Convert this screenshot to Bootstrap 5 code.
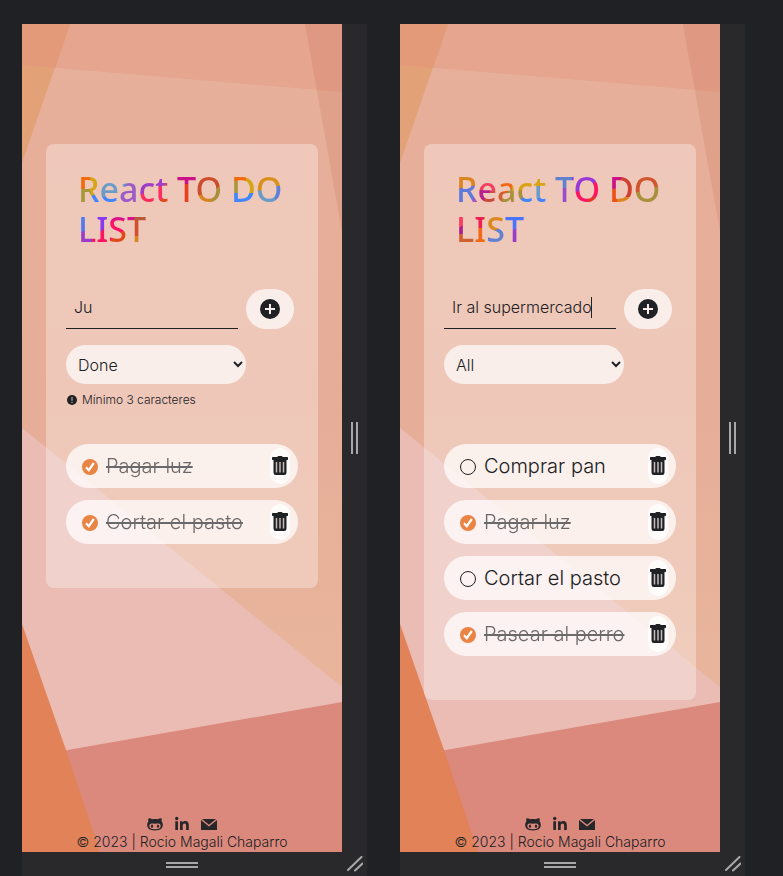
<!DOCTYPE html>
<html lang="es">
<head>
<meta charset="utf-8">
<meta name="viewport" content="width=device-width, initial-scale=1">
<title>React TO DO LIST</title>
<link rel="stylesheet" href="https://cdn.jsdelivr.net/npm/bootstrap@5.3.0/dist/css/bootstrap.min.css">
<style>
  :root { --ink: #202124; --rail: #29292b; }
  body { background: var(--ink); color: var(--ink); font-family: Inter, "Liberation Sans", sans-serif; font-weight: 300; }
  .stage { grid-template-columns: repeat(auto-fit, minmax(340px, 1fr)); gap: 33px; padding: 24px 38px 0 22px; }
  .device { grid-template-columns: 1fr 25px; grid-template-rows: 1fr 24px; background: var(--rail); }
  .screen { padding: 120px 24px 0; background: url("data:image/svg+xml,%3Csvg xmlns='http://www.w3.org/2000/svg' viewBox='0 0 320 828' preserveAspectRatio='none'%3E%3Cdefs%3E%3ClinearGradient id='g' x1='0' y1='0' x2='0' y2='1'%3E%3Cstop offset='0' stop-color='%23e7b09b'/%3E%3Cstop offset='.45' stop-color='%23e6ad98'/%3E%3Cstop offset='.75' stop-color='%23e8b49b'/%3E%3C/linearGradient%3E%3C/defs%3E%3Cpath fill='url(%23g)' d='M0 0h320v828H0z'/%3E%3Cpath fill='%23e5a58e' d='M0 0h320v68L0 41z'/%3E%3Cpath fill='%23e3a178' d='M0 0h48L0 139z'/%3E%3Cpath fill='%23e39a78' d='M0 0h48L33 44 0 41z'/%3E%3Cpath fill='%23dfa18a' d='M283 0h37v208z'/%3E%3Cpath fill='%23df9882' d='M283 0h37v68l-25-2z'/%3E%3Cpath fill='%23eabcb4' d='M0 404L320 663V828H0z'/%3E%3Cpath fill='%23db897c' d='M0 734L320 678V828H0z'/%3E%3Cpath fill='%23e28258' d='M0 600L44 726 78 828H0z'/%3E%3C/svg%3E") center / 100% 100% no-repeat; }
  .todo { background: rgba(255, 255, 255, .32); border-radius: 8px; padding: 25px 20px 44px; }
  .todo-title { font: 500 34px/40px "Noto Sans", "Open Sans", sans-serif; margin: 0 12px 40px; color: transparent; background-repeat: no-repeat; background-size: 208px 80px; -webkit-background-clip: text; background-clip: text; }
  .title-a { background-color: #c0487c; background-image: url("data:image/svg+xml,%3Csvg xmlns='http://www.w3.org/2000/svg' viewBox='0 0 208 80'%3E%3Cpath fill='%237d7fd0' d='M36 0h24v40H36z'/%3E%3Cpath fill='%23f26a0c' d='M0 0h14L10 22H0z'/%3E%3Cpath fill='%23d4a514' d='M14 0h8v40H6l4-18z'/%3E%3Cpath fill='%23a8983c' d='M0 20h12l4 20H0z'/%3E%3Cpath fill='%234285ff' d='M12 28l10-6v18H16zM20 24h20v16H20z'/%3E%3Cpath fill='%236b9bc8' d='M20 0h32L44 24 20 29z'/%3E%3Cpath fill='%239b5bc8' d='M40 27l12-15h8v28H38z'/%3E%3Cpath fill='%23a03cc8' d='M58 0h28v18L58 29z'/%3E%3Cpath fill='%23ff2e60' d='M58 28l20-10 17-2v24H58z'/%3E%3Cpath fill='%23e04818' d='M80 40l2-9 12-4v13z'/%3E%3Cpath fill='%23cc1088' d='M94 0h26v16H94z'/%3E%3Cpath fill='%23e8401c' d='M94 15h24v25H94z'/%3E%3Cpath fill='%23cb4e2c' d='M118 0h26v24l-26 5z'/%3E%3Cpath fill='%23d88420' d='M118 27l18-5v18h-18z'/%3E%3Cpath fill='%23a8903c' d='M134 23l10-8v25h-12z'/%3E%3Cpath fill='%23f26a0c' d='M150 0h18v12h-18z'/%3E%3Cpath fill='%23d4a514' d='M168 0h12v24h-28V12h16z'/%3E%3Cpath fill='%23a8983c' d='M150 12h10v13h-10z'/%3E%3Cpath fill='%234285ff' d='M150 24h28v16h-28z'/%3E%3Cpath fill='%23d89018' d='M178 0h30v20l-30 4z'/%3E%3Cpath fill='%236b9bc8' d='M178 22l30-4v22h-30z'/%3E%3Cpath fill='%236080d8' d='M196 17h12v23h-10z'/%3E%3Cpath fill='%235078f0' d='M0 40h18v20L0 66z'/%3E%3Cpath fill='%239b3cc8' d='M0 64l18-6v22H0z'/%3E%3Cpath fill='%23ff1464' d='M14 80V68l15-14v26z'/%3E%3Cpath fill='%238838f0' d='M18 40h22L24 62h-6z'/%3E%3Cpath fill='%23d8108c' d='M36 40h24v14l-28 4-6-4z'/%3E%3Cpath fill='%23ff1464' d='M28 58l8-7h12v15l-20 8z'/%3E%3Cpath fill='%23e04818' d='M28 74l20-14v20H28z'/%3E%3Cpath fill='%23b85838' d='M58 40h12v12H56z'/%3E%3Cpath fill='%23d05030' d='M48 51h22v16H48z'/%3E%3Cpath fill='%23d88420' d='M48 67h22v13H48z'/%3E%3C/svg%3E"); }
  .title-b { background-color: #cf5044; background-image: url("data:image/svg+xml,%3Csvg xmlns='http://www.w3.org/2000/svg' viewBox='0 0 208 80'%3E%3Cpath fill='%23dc8420' d='M0 0h22v17L0 20z'/%3E%3Cpath fill='%235f78dc' d='M0 20l22-4v24H0z'/%3E%3Cpath fill='%239b5bc8' d='M14 34l6-8v14h-6z'/%3E%3Cpath fill='%23f04060' d='M20 0h20v22H20z'/%3E%3Cpath fill='%23b8208c' d='M20 21h14v8l-6 11h-8z'/%3E%3Cpath fill='%23c84a38' d='M26 40l4-16h10v16z'/%3E%3Cpath fill='%23f06818' d='M40 0h17v22L40 24z'/%3E%3Cpath fill='%23d06030' d='M39 23h12v17H39z'/%3E%3Cpath fill='%23a8903c' d='M46 40V30l8-10h14v20z'/%3E%3Cpath fill='%23d8a414' d='M56 0h34v19L56 22z'/%3E%3Cpath fill='%234285ff' d='M64 31l14-14h16v23H64z'/%3E%3Cpath fill='%236b9bc8' d='M76 17h16v10l-16 4z'/%3E%3Cpath fill='%236080d0' d='M94 0h26v20H94z'/%3E%3Cpath fill='%239b4cc8' d='M94 19h24v21H94z'/%3E%3Cpath fill='%239838d8' d='M116 0h28v14L132 28h-16z'/%3E%3Cpath fill='%23ff1464' d='M133 17l11-7v30h-28V25z'/%3E%3Cpath fill='%23e43828' d='M132 40V30l12-4v14z'/%3E%3Cpath fill='%23cc1088' d='M150 0h22v16l-22 6z'/%3E%3Cpath fill='%23d04030' d='M172 0h8v29h-18V14z'/%3E%3Cpath fill='%23f05014' d='M150 20h12v20h-12z'/%3E%3Cpath fill='%23dc8420' d='M161 28h18v12h-18z'/%3E%3Cpath fill='%23d05630' d='M178 0h30v18l-30 8z'/%3E%3Cpath fill='%23a8903c' d='M178 24l30-8v24h-30z'/%3E%3Cpath fill='%23ff3860' d='M0 40h18v20H0z'/%3E%3Cpath fill='%23a82088' d='M0 60l8-4v10H0z'/%3E%3Cpath fill='%23d06030' d='M0 65h18v15H0z'/%3E%3Cpath fill='%23f02050' d='M18 40h10v20H18z'/%3E%3Cpath fill='%23f06818' d='M18 59h10v21H18z'/%3E%3Cpath fill='%23dc8820' d='M28 40h20v24l-20 16z'/%3E%3Cpath fill='%236080d0' d='M29 71l8-9 10-4v22H29z'/%3E%3Cpath fill='%234a74ff' d='M47 40h24v24l-24 4z'/%3E%3Cpath fill='%239b3cc8' d='M47 66l24-12v26H47z'/%3E%3C/svg%3E"); }
  .entry, .entry:focus { border: 0; border-bottom: 1px solid var(--ink); border-radius: 0; background-color: transparent; color: var(--ink); font-size: 16px; font-weight: 300; height: 40px; padding: 0 8px 4px; box-shadow: none; }
  .entry.typing { background: linear-gradient(var(--ink), var(--ink)) 147px 8px / 1px 21px no-repeat; caret-color: transparent; }
  .add-btn { background: #faeeea; border: 0; border-radius: 20px; width: 48px; height: 40px; }
  .filter { appearance: auto; background: #faeeea; color: var(--ink); border: 0; border-radius: 20px; width: 180px; height: 39px; padding: 0 0 0 8px; font-size: 16px; font-weight: 300; }
  .hint { font-size: 12px; line-height: 16px; height: 16px; gap: 5px; padding-left: 1px; font-weight: 300; margin-top: 8px; }
  .tasks { gap: 12px; margin: 36px 0 0; }
  .task { height: 44px; border-radius: 22px; background: rgba(255, 255, 255, .72); padding: 4px 8px 4px 16px; }
  .tick { appearance: none; flex: none; width: 16px; height: 16px; margin: 2px 8px 0 0; border: 1px solid var(--ink); border-radius: 50%; }
  .tick:checked { border: 0; background: #ea8444 url("data:image/svg+xml,%3Csvg xmlns='http://www.w3.org/2000/svg' viewBox='0 0 16 16'%3E%3Cpath d='M4 8.2l2.8 3L11.8 4' fill='none' stroke='white' stroke-width='2.2'/%3E%3C/svg%3E"); }
  .task-name { font-size: 20px; line-height: 24px; white-space: nowrap; font-weight: 300; }
  .tick:checked + .task-name { text-decoration: line-through; opacity: .65; }
  .bin-btn { width: 20px; height: 36px; border: 0; border-radius: 10px; background: rgba(255, 255, 255, .8); }
  .foot { font-size: 14px; line-height: 20px; }
  .links { gap: 11px; line-height: 16px; }
  .links a { color: #27272a; }
  svg { display: block; flex: none; }
</style>
</head>
<body>
<svg class="d-none" xmlns="http://www.w3.org/2000/svg">
  <symbol id="i-plus" viewBox="0 0 20 20"><circle cx="10" cy="10" r="10" fill="#202124"/><path d="M10 5v10M5 10h10" stroke="#faeeea" stroke-width="2"/></symbol>
  <symbol id="i-bin" viewBox="0 0 16 20"><path fill="#202124" d="M0 1.600Q0 1 .8 1H5.300Q5.600 0 6.500 0h3q.9 0 1.200 1h4.500q.8 0 .8.600V3.600q0 .4-.5.400H14.500v12.500q0 2.500-2.300 2.500H3.800q-2.300 0-2.300-2.500V4H.5Q0 4 0 3.600z"/><path d="M4.500 6v10.500M8 6v10.500M11.500 6v10.500" stroke="#c4bcbb" stroke-width="1.500"/></symbol>
  <symbol id="i-alert" viewBox="0 0 10 10"><circle cx="5" cy="5" r="5" fill="#202124"/><path d="M5 2v3.700M5 6.800V8" stroke="#b09a94" stroke-width="1.300"/></symbol>
  <symbol id="i-cat" viewBox="0 0 16 16"><path fill="currentColor" fill-rule="evenodd" d="M1.600 2.200C3 2 4.200 2.600 5.200 3.300c1.800-.4 3.800-.4 5.600 0 1-.7 2.200-1.300 3.600-1.100.5 1.300.5 2.400.2 3.300.9 1 1.200 2.100 1.200 3.300 0 4-2.600 5.600-7.800 5.600S.2 12.800.2 8.800c0-1.200.3-2.300 1.200-3.300-.3-.9-.3-2 .2-3.300zM4.800 7.600c-1.700 0-2.500 1-2.500 2.400 0 2.300 2 3.200 5.700 3.200s5.700-.9 5.700-3.200c0-1.400-.8-2.400-2.500-2.400-1.200 0-2 .2-3.200.2s-2-.2-3.200-.2z"/><ellipse cx="5" cy="10.200" rx="1.100" ry="1.600" fill="currentColor"/><ellipse cx="11" cy="10.200" rx="1.100" ry="1.600" fill="currentColor"/></symbol>
  <symbol id="i-in" viewBox="0 0 16 16"><circle cx="2.700" cy="2.500" r="1.700" fill="currentColor"/><path fill="currentColor" d="M1.300 5.300H4V14H1.300zM6 5.300h2.600v1.200c.5-.8 1.400-1.400 2.700-1.400 2.700 0 3.500 1.700 3.500 4.100V14h-2.700V9.700c0-1.200-.2-2.200-1.500-2.200S8.700 8.500 8.700 9.700V14H6z"/></symbol>
  <symbol id="i-mail" viewBox="0 0 16 16"><path fill="currentColor" d="M1 3h14L8 8.700zM0 4.100l8 6.300 8-6.300V14H0z"/></symbol>
  <symbol id="i-rail-v" viewBox="0 0 8 32"><path d="M1 0v32M6 0v32" stroke="#a8a8aa" stroke-width="2"/></symbol>
  <symbol id="i-rail-h" viewBox="0 0 32 8"><path d="M0 3h32M0 7h32" stroke="#a8a8aa" stroke-width="2"/></symbol>
  <symbol id="i-corner" viewBox="0 0 16 16"><path d="M1 14L14.500 1M8 14.500L15.500 7.500" stroke="#a8a8aa" stroke-width="2" stroke-linecap="round"/></symbol>
</svg>

<main class="stage d-grid min-vh-100">
  <div class="device d-grid">
    <section class="screen d-flex flex-column">
      <div class="todo">
        <h1 class="todo-title title-a">React TO DO LIST</h1>
        <form>
          <div class="d-flex gap-2 pe-1 mb-3">
            <input class="form-control entry" type="text" value="Ju" aria-label="Nueva tarea">
            <button class="btn add-btn d-flex flex-shrink-0 align-items-center justify-content-center p-0" type="button" aria-label="Agregar"><svg width="20" height="20"><use href="#i-plus"/></svg></button>
          </div>
          <select class="filter d-block" aria-label="Filtro"><option>All</option><option selected>Done</option></select>
          <p class="hint d-flex align-items-center mb-0"><svg width="10" height="10"><use href="#i-alert"/></svg>Mínimo 3 caracteres</p>
        </form>
        <ul class="tasks list-unstyled d-flex flex-column">
          <li class="task d-flex align-items-center"><input class="tick" type="checkbox" id="a1" checked><label class="task-name" for="a1">Pagar luz</label><button class="btn bin-btn ms-auto p-0 d-flex align-items-center justify-content-center" type="button" aria-label="Eliminar"><svg width="16" height="20"><use href="#i-bin"/></svg></button></li>
          <li class="task d-flex align-items-center"><input class="tick" type="checkbox" id="a2" checked><label class="task-name" for="a2">Cortar el pasto</label><button class="btn bin-btn ms-auto p-0 d-flex align-items-center justify-content-center" type="button" aria-label="Eliminar"><svg width="16" height="20"><use href="#i-bin"/></svg></button></li>
        </ul>
      </div>
      <footer class="foot mt-auto text-center text-nowrap">
        <div class="links d-flex justify-content-center"><a href="#github" aria-label="GitHub"><svg width="16" height="16"><use href="#i-cat"/></svg></a><a href="#linkedin" aria-label="LinkedIn"><svg width="16" height="16"><use href="#i-in"/></svg></a><a href="#mail" aria-label="Correo"><svg width="16" height="16"><use href="#i-mail"/></svg></a></div>
        © 2023 | Rocio Magali Chaparro
      </footer>
    </section>
    <div class="d-flex align-items-center justify-content-center"><svg width="8" height="32"><use href="#i-rail-v"/></svg></div>
    <div class="d-flex align-items-center justify-content-center"><svg width="32" height="8"><use href="#i-rail-h"/></svg></div>
    <div class="d-flex align-items-center justify-content-center"><svg width="16" height="16"><use href="#i-corner"/></svg></div>
  </div>

  <div class="device d-grid">
    <section class="screen d-flex flex-column">
      <div class="todo">
        <h1 class="todo-title title-b">React TO DO LIST</h1>
        <form>
          <div class="d-flex gap-2 pe-1 mb-3">
            <input class="form-control entry typing" type="text" value="Ir al supermercado" aria-label="Nueva tarea">
            <button class="btn add-btn d-flex flex-shrink-0 align-items-center justify-content-center p-0" type="button" aria-label="Agregar"><svg width="20" height="20"><use href="#i-plus"/></svg></button>
          </div>
          <select class="filter d-block" aria-label="Filtro"><option selected>All</option><option>Done</option></select>
          <p class="hint mb-0"></p>
        </form>
        <ul class="tasks list-unstyled d-flex flex-column">
          <li class="task d-flex align-items-center"><input class="tick" type="checkbox" id="b1"><label class="task-name" for="b1">Comprar pan</label><button class="btn bin-btn ms-auto p-0 d-flex align-items-center justify-content-center" type="button" aria-label="Eliminar"><svg width="16" height="20"><use href="#i-bin"/></svg></button></li>
          <li class="task d-flex align-items-center"><input class="tick" type="checkbox" id="b2" checked><label class="task-name" for="b2">Pagar luz</label><button class="btn bin-btn ms-auto p-0 d-flex align-items-center justify-content-center" type="button" aria-label="Eliminar"><svg width="16" height="20"><use href="#i-bin"/></svg></button></li>
          <li class="task d-flex align-items-center"><input class="tick" type="checkbox" id="b3"><label class="task-name" for="b3">Cortar el pasto</label><button class="btn bin-btn ms-auto p-0 d-flex align-items-center justify-content-center" type="button" aria-label="Eliminar"><svg width="16" height="20"><use href="#i-bin"/></svg></button></li>
          <li class="task d-flex align-items-center"><input class="tick" type="checkbox" id="b4" checked><label class="task-name" for="b4">Pasear al perro</label><button class="btn bin-btn ms-auto p-0 d-flex align-items-center justify-content-center" type="button" aria-label="Eliminar"><svg width="16" height="20"><use href="#i-bin"/></svg></button></li>
        </ul>
      </div>
      <footer class="foot mt-auto text-center text-nowrap">
        <div class="links d-flex justify-content-center"><a href="#github" aria-label="GitHub"><svg width="16" height="16"><use href="#i-cat"/></svg></a><a href="#linkedin" aria-label="LinkedIn"><svg width="16" height="16"><use href="#i-in"/></svg></a><a href="#mail" aria-label="Correo"><svg width="16" height="16"><use href="#i-mail"/></svg></a></div>
        © 2023 | Rocio Magali Chaparro
      </footer>
    </section>
    <div class="d-flex align-items-center justify-content-center"><svg width="8" height="32"><use href="#i-rail-v"/></svg></div>
    <div class="d-flex align-items-center justify-content-center"><svg width="32" height="8"><use href="#i-rail-h"/></svg></div>
    <div class="d-flex align-items-center justify-content-center"><svg width="16" height="16"><use href="#i-corner"/></svg></div>
  </div>
</main>
<script src="https://cdn.jsdelivr.net/npm/bootstrap@5.3.0/dist/js/bootstrap.bundle.min.js"></script>
</body>
</html>
